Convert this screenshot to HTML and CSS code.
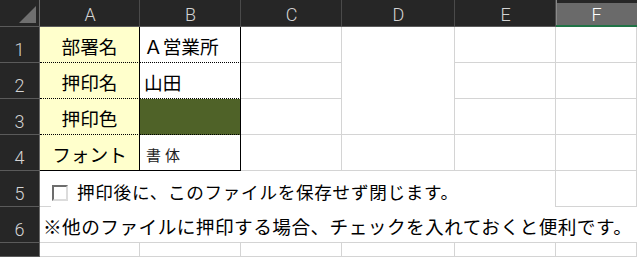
FILE: index.html
```html
<!doctype html>
<html lang="ja">

<head>
    <meta charset="UTF-8">
    <title>押印設定</title>
    <link rel="stylesheet" href="styles.css">
</head>

<body>
    <div class="sheet">
        <!-- column headers -->
        <div class="hd corner"><span class="corner--tri"></span></div>
        <div class="hd col">A</div>
        <div class="hd col">B</div>
        <div class="hd col">C</div>
        <div class="hd col">D</div>
        <div class="hd col">E</div>
        <div class="hd col col--sel">F</div>

        <!-- row 1 -->
        <div class="hd row">1</div>
        <div class="cell label dot">部署名</div>
        <div class="cell value dot">Ａ営業所</div>
        <div class="cell"></div>
        <div class="cell merge-d"></div>
        <div class="cell"></div>
        <div class="cell"></div>

        <!-- row 2 -->
        <div class="hd row">2</div>
        <div class="cell label dot">押印名</div>
        <div class="cell value dot">山田</div>
        <div class="cell"></div>
        <div class="cell"></div>
        <div class="cell"></div>

        <!-- row 3 -->
        <div class="hd row">3</div>
        <div class="cell label dot">押印色</div>
        <div class="cell value dot stamp-color"></div>
        <div class="cell"></div>
        <div class="cell"></div>
        <div class="cell"></div>

        <!-- row 4 -->
        <div class="hd row">4</div>
        <div class="cell label last">フォント</div>
        <div class="cell value last font-name">書体</div>
        <div class="cell"></div>
        <div class="cell"></div>
        <div class="cell"></div>
        <div class="cell"></div>

        <!-- row 5 -->
        <div class="hd row">5</div>
        <div class="cell check-row">
            <span class="check-row--edge"></span>
            <label class="checkbox">
                <span class="checkbox--box"></span>
                <span class="checkbox--text">押印後に、このファイルを保存せず閉じます。</span>
            </label>
        </div>
        <div class="cell"></div>

        <!-- row 6 -->
        <div class="hd row">6</div>
        <div class="cell note">※他のファイルに押印する場合、チェックを入れておくと便利です。</div>

        <!-- row 7 -->
        <div class="hd row"></div>
        <div class="cell"></div>
        <div class="cell"></div>
        <div class="cell"></div>
        <div class="cell"></div>
        <div class="cell"></div>
        <div class="cell"></div>
    </div>
</body>

</html>
```

FILE: styles.css
```css
html,
body {
    margin: 0;
    overflow: hidden;
    background: #ffffff;
}

body {
    font-family: "Noto Sans CJK JP", "Noto Sans", sans-serif;
}

.sheet {
    display: grid;
    grid-template-columns: 40px 100px 101px 101px 113px 101px 81px;
    grid-template-rows: 27px repeat(6, 36px) 14px;
    width: 637px;
    height: 257px;
}

/* headers */
.hd {
    box-sizing: border-box;
    background-color: #262626;
    color: #d4d4d4;
    font-family: Roboto, "DejaVu Sans", sans-serif;
    font-weight: 300;
    font-size: 18px;
}

.corner {
    position: relative;
    border-right: 1px solid #6a6a6a;
    border-bottom: 1px solid #5a5a5a;
}

.corner--tri {
    position: absolute;
    right: 3px;
    bottom: 3px;
    width: 0;
    height: 0;
    border-left: 17px solid transparent;
    border-bottom: 17px solid #6f6f6f;
}

.col {
    display: flex;
    align-items: center;
    justify-content: center;
    padding-top: 3px;
    border-bottom: 1px solid #5a5a5a;
    background-image: linear-gradient(#262626, #262626);
    background-size: 100% 3px;
    background-repeat: no-repeat;
    box-shadow: inset -1px 0 0 #4a4a4a;
}

.col--sel {
    background-color: #6a6a6a;
    color: #ffffff;
    border-bottom: 2px solid #217346;
    box-shadow: inset 1px 0 0 #8a8a8a;
}

.row {
    display: flex;
    align-items: flex-end;
    justify-content: center;
    padding-bottom: 2px;
    border-right: 1px solid #6a6a6a;
    border-bottom: 1px solid #5a5a5a;
}

/* cells */
.cell {
    box-sizing: border-box;
    border-right: 1px solid #d4d4d4;
    border-bottom: 1px solid #d4d4d4;
    font-size: 18.67px;
    color: #000000;
    display: flex;
    align-items: center;
    white-space: nowrap;
}

.label {
    background-color: #ffffcc;
    justify-content: center;
    border-right: 1px solid #000000;
    padding-top: 1px;
}

.value {
    background-color: #ffffff;
    padding-left: 4px;
    padding-top: 1px;
    border-right: 1px solid #000000;
}

.dot {
    border-bottom: 1px dotted #000000;
}

.last {
    border-bottom: 1px solid #000000;
}

.stamp-color {
    background-color: #4f6228;
}

.font-name {
    font-size: 15px;
    letter-spacing: 4px;
    padding-left: 6px;
    padding-top: 4px;
    color: #222222;
}

.merge-d {
    grid-row: span 3;
}

.check-row {
    grid-column: span 5;
    border-bottom: none;
    align-items: stretch;
}

.check-row--edge {
    width: 11px;
    border-bottom: 1px solid #d4d4d4;
}

.checkbox {
    display: flex;
    align-items: center;
    margin-top: 3px;
    flex: 1;
    background-color: #ffffff;
}

.checkbox--box {
    box-sizing: border-box;
    width: 16px;
    height: 16px;
    margin-left: 1px;
    margin-top: 4px;
    border: 2px solid;
    border-color: #6d6d6d #dcdcdc #dcdcdc #6d6d6d;
}

.checkbox--text {
    margin-left: 9px;
    font-size: 17.6px;
    letter-spacing: 0.7px;
    margin-top: 1px;
}

.note {
    grid-column: span 6;
    border-right: none;
    padding-left: 3px;
    padding-top: 2px;
    letter-spacing: 0.45px;
}
```
